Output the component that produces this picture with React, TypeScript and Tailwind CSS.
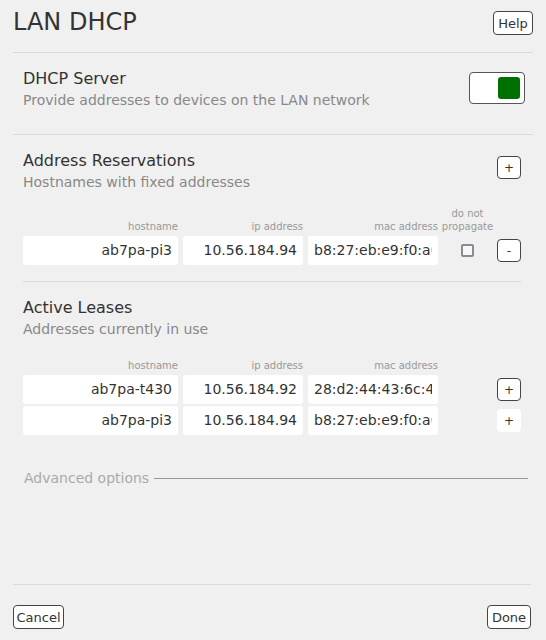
import React from "react";

const labelCls = "text-[10px] leading-[13px] text-[#999]";
const inputBase =
  "h-[29px] bg-white rounded-[3px] border-0 outline-none text-[14px] leading-[29px] text-[#333] px-[6px] font-['DejaVu_Sans',sans-serif]";

function Field({ value, w, right }: { value: string; w: string; right?: boolean }) {
  return (
    <input
      readOnly
      value={value}
      className={`${inputBase} ${w} ${right ? "text-right" : "text-left"}`}
    />
  );
}

function SmallBtn({ children, bordered }: { children: React.ReactNode; bordered?: boolean }) {
  return (
    <button
      className={`w-[24px] h-[23px] flex items-center justify-center bg-white rounded-[4px] text-[12px] leading-none text-[#333] ${
        bordered ? "border border-[#444]" : "border border-transparent"
      }`}
    >
      {children}
    </button>
  );
}

function HeaderLabels({ propagate }: { propagate?: boolean }) {
  return (
    <div className="flex items-end">
      <div className={`${labelCls} w-[155px] text-right`}>hostname</div>
      <div className={`${labelCls} w-[120px] ml-[5px] text-right`}>ip address</div>
      <div className={`${labelCls} w-[130px] ml-[5px] text-right`}>mac address</div>
      {propagate && (
        <div className={`${labelCls} w-[59px] text-center`}>
          do not
          <br />
          propagate
        </div>
      )}
    </div>
  );
}

function SectionTitle({ title, sub }: { title: string; sub: string }) {
  return (
    <div>
      <div className="text-[16px] leading-[20px] text-[#333]">{title}</div>
      <div className="mt-[1px] text-[14px] leading-[20px] text-[#888]">{sub}</div>
    </div>
  );
}

export default function App() {
  return (
    <div className="h-[640px] w-full bg-[#f0f0f0] flex flex-col px-[13px] font-['DejaVu_Sans',sans-serif] text-[#333]">
      <div className="flex-1">
        {/* Header */}
        <div className="flex justify-between items-start pt-[7px] pb-[15px] border-b border-[#dadada]">
          <h1 className="text-[24px] leading-[30px] text-[#333]">LAN DHCP</h1>
          <button className="mt-[4px] h-[24px] w-[40px] bg-white border border-[#444] rounded-[4px] text-[13px] leading-none text-[#333]">
            Help
          </button>
        </div>

        {/* DHCP Server */}
        <div className="flex justify-between items-start pl-[10px] pt-[16px] pb-[24px] border-b border-[#dadada]">
          <SectionTitle title="DHCP Server" sub="Provide addresses to devices on the LAN network" />
          <div className="mt-[3px] mr-[8px] w-[56px] h-[32px] bg-white border border-[#555] rounded-[4px] flex items-center justify-end pr-[4px]">
            <div className="w-[22px] h-[22px] bg-[#007000] rounded-[3px]" />
          </div>
        </div>

        {/* Address Reservations */}
        <div className="pl-[10px] pr-[12px]">
          <div className="pt-[16px] pb-[16px] border-b border-[#dadada]">
            <div className="flex justify-between items-start">
              <SectionTitle title="Address Reservations" sub="Hostnames with fixed addresses" />
              <div className="mt-[5px]">
                <SmallBtn bordered>+</SmallBtn>
              </div>
            </div>
            <div className="mt-[15px]">
              <HeaderLabels propagate />
            </div>
            <div className="mt-[3px] flex items-center">
              <Field value="ab7pa-pi3" w="w-[155px]" right />
              <div className="ml-[5px]">
                <Field value="10.56.184.94" w="w-[120px]" right />
              </div>
              <div className="ml-[5px]">
                <Field value="b8:27:eb:e9:f0:a6" w="w-[130px]" />
              </div>
              <div className="w-[59px] flex justify-center">
                <div className="w-[13px] h-[13px] border-2 border-[#8c8894] rounded-[2px] bg-[#f7f7f7]" />
              </div>
              <SmallBtn bordered>-</SmallBtn>
            </div>
          </div>

          {/* Active Leases */}
          <div className="pt-[16px]">
            <SectionTitle title="Active Leases" sub="Addresses currently in use" />
            <div className="mt-[20px]">
              <HeaderLabels />
            </div>
            <div className="mt-[3px] flex items-center">
              <Field value="ab7pa-t430" w="w-[155px]" right />
              <div className="ml-[5px]">
                <Field value="10.56.184.92" w="w-[120px]" right />
              </div>
              <div className="ml-[5px]">
                <Field value="28:d2:44:43:6c:4e" w="w-[130px]" />
              </div>
              <div className="w-[59px]" />
              <SmallBtn bordered>+</SmallBtn>
            </div>
            <div className="mt-[2px] flex items-center">
              <Field value="ab7pa-pi3" w="w-[155px]" right />
              <div className="ml-[5px]">
                <Field value="10.56.184.94" w="w-[120px]" right />
              </div>
              <div className="ml-[5px]">
                <Field value="b8:27:eb:e9:f0:a6" w="w-[130px]" />
              </div>
              <div className="w-[59px]" />
              <SmallBtn>+</SmallBtn>
            </div>
          </div>
        </div>

        {/* Advanced options */}
        <div className="mt-[33px] pl-[11px] pr-[5px] flex items-center h-[20px]">
          <span className="text-[14px] leading-[20px] text-[#aaa]">Advanced options</span>
          <div className="ml-[5px] flex-1 h-px bg-[#999]" />
        </div>
      </div>

      {/* Footer */}
      <div className="border-t border-[#dadada] mr-[2px] pt-[20px] pb-[11px] flex justify-between">
        <button className="h-[24px] w-[51px] bg-white border border-[#444] rounded-[4px] text-[13px] leading-none text-[#333]">
          Cancel
        </button>
        <button className="h-[24px] w-[44px] bg-white border border-[#444] rounded-[4px] text-[13px] leading-none text-[#333]">
          Done
        </button>
      </div>
    </div>
  );
}
